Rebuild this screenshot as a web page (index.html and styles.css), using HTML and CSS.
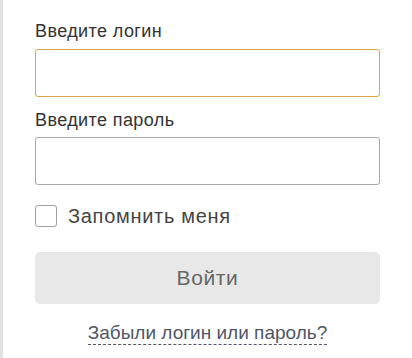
FILE: index.html
```html
<!DOCTYPE html>
<html lang="ru">
<head>
    <meta charset="UTF-8">
    <meta name="viewport" content="width=device-width, initial-scale=1.0">
    <title>Вход</title>
    <link rel="stylesheet" href="styles.css">
</head>
<body>
    <div class="login">
        <form class="login-form">
            <label class="field-label" for="login">Введите логин</label>
            <input class="field-input focused" type="text" id="login">

            <label class="field-label second" for="password">Введите пароль</label>
            <input class="field-input" type="password" id="password">

            <label class="remember">
                <span class="checkbox"></span>
                <span class="remember-text">Запомнить меня</span>
            </label>

            <button class="btn" type="button">Войти</button>

            <div class="forgot">
                <a href="#" class="forgot-link">Забыли логин или пароль?</a>
            </div>
        </form>
    </div>
</body>
</html>
```

FILE: styles.css
```css
body {
    margin: 0;
    padding: 0;
    background-color: #fff;
    font-family: "Liberation Sans", Arial, sans-serif;
}
.login {
    border-left: 3px solid #e2e2e2;
    min-height: 358px;
    box-sizing: border-box;
    padding: 21px 32px 0 32px;
}
.login-form {
    width: 345px;
    display: flex;
    flex-direction: column;
}
.field-label {
    font-size: 18px;
    letter-spacing: 0.4px;
    line-height: 20px;
    color: #333;
    margin-bottom: 8px;
}
.field-label.second {
    margin-top: 13px;
    margin-bottom: 7px;
}
.field-input {
    box-sizing: border-box;
    height: 48px;
    width: 100%;
    margin: 0;
    border: 1px solid #a8a8a8;
    border-radius: 3px;
    background: #fff;
    outline: none;
    font-size: 17px;
    padding: 0 12px;
}
.field-input.focused {
    border-color: #dba745;
}
.remember {
    display: flex;
    align-items: center;
    margin-top: 20px;
    height: 22px;
}
.checkbox {
    box-sizing: border-box;
    width: 22px;
    height: 22px;
    border: 1px solid #a0a0a0;
    border-radius: 3px;
    background: #fff;
}
.remember-text {
    margin-left: 11px;
    font-size: 20px;
    letter-spacing: 0.7px;
    color: #444;
}
.btn {
    margin-top: 25px;
    height: 52px;
    width: 100%;
    border: none;
    border-radius: 5px;
    background-color: #e8e8e8;
    color: #666;
    font-family: "Liberation Sans", Arial, sans-serif;
    font-size: 21px;
    letter-spacing: 0.6px;
}
.forgot {
    margin-top: 18px;
    text-align: center;
    line-height: 22px;
}
.forgot-link {
    display: inline-block;
    font-size: 19px;
    line-height: 22px;
    color: #4f5864;
    text-decoration: none;
    border-bottom: 1px dashed #4f5864;
}
```
